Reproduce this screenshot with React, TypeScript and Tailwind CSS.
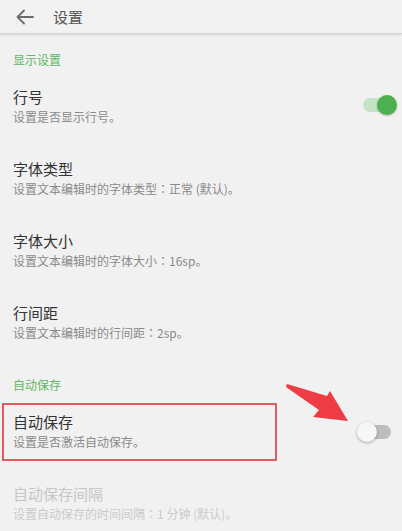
import React from "react";

const font = { fontFamily: '"Noto Sans CJK SC", "Noto Sans", sans-serif' };

function Colon() {
  return <span style={{ fontFamily: '"Noto Sans CJK TC", sans-serif' }}>：</span>;
}

function ToggleOn() {
  return (
    <div className="relative w-[34px] h-[22px] shrink-0">
      <div className="absolute left-0 right-[4px] top-[4px] h-[14px] rounded-full bg-[#c3e3c4]" />
      <div className="absolute right-0 top-[1px] w-[20px] h-[20px] rounded-full bg-[#4caf50] shadow-[0_1px_2px_rgba(0,0,0,0.25)]" />
    </div>
  );
}

function ToggleOff() {
  return (
    <div className="relative w-[34px] h-[22px] shrink-0">
      <div className="absolute left-[4px] right-0 top-[4px] h-[14px] rounded-full bg-[#bdbdbd]" />
      <div className="absolute left-0 top-[1px] w-[20px] h-[20px] rounded-full bg-[#f7f7f7] shadow-[0_1px_3px_rgba(0,0,0,0.3)]" />
    </div>
  );
}

function Item({ title, sub, right }: { title: string; sub: React.ReactNode; right?: React.ReactNode }) {
  return (
    <div className="flex items-center h-[72px] pl-[13px]">
      <div className="flex flex-col">
        <div className="text-[15px] leading-[22px] text-[#333333]">{title}</div>
        <div className="text-[12px] leading-[18px] text-[#8a8a8a]">{sub}</div>
      </div>
      {right && <div className="ml-auto mr-[5px] mt-[-2px]">{right}</div>}
    </div>
  );
}

export default function App() {
  return (
    <div className="relative w-[402px] h-[531px] overflow-hidden bg-[#f1f1f1]" style={font}>
      {/* header */}
      <div className="h-[34px] flex items-center bg-[#f2f2f2] border-b border-[#d4d4d4] shadow-[0_1px_2px_rgba(0,0,0,0.12)]">
        <svg width="18" height="16" viewBox="0 0 18 16" className="ml-[16px]" fill="none" stroke="#6b6b6b" strokeWidth="1.8" strokeLinecap="round" strokeLinejoin="round">
          <path d="M17 8H1.5M8 1.5L1.5 8L8 14.5" />
        </svg>
        <div className="ml-[19px] text-[15px] leading-[20px] text-[#555555] mt-[1px]">设置</div>
      </div>

      {/* section 1 */}
      <div className="pt-[18px] pb-[2px] pl-[13px] text-[12px] leading-[16px] text-[#5fb862]">显示设置</div>
      <Item title="行号" sub="设置是否显示行号。" right={<ToggleOn />} />
      <Item title="字体类型" sub={<>设置文本编辑时的字体类型<Colon />正常 (默认)。</>} />
      <Item title="字体大小" sub={<>设置文本编辑时的字体大小<Colon />16sp。</>} />
      <Item title="行间距" sub={<>设置文本编辑时的行间距<Colon />2sp。</>} />

      {/* section 2 */}
      <div className="pt-[19px] pl-[13px] text-[12px] leading-[16px] text-[#5fb862]">自动保存</div>
      <div className="pt-[10px] flex items-center">
        <div className="ml-[2px] w-[275px] h-[58px] border-2 border-[#e35b5f] pl-[9px] pt-[6px] flex flex-col">
          <div className="text-[15px] leading-[22px] text-[#333333]">自动保存</div>
          <div className="text-[12px] leading-[18px] text-[#8a8a8a]">设置是否激活自动保存。</div>
        </div>
        <div className="ml-auto mr-[11px]">
          <ToggleOff />
        </div>
      </div>
      <div className="pt-[22px] pl-[13px] flex flex-col">
        <div className="text-[15px] leading-[22px] text-[#c6c6c6]">自动保存间隔</div>
        <div className="text-[12px] leading-[18px] text-[#cbcbcb]">设置自动保存的时间间隔<Colon />1 分钟 (默认)。</div>
      </div>

      {/* red annotation arrow */}
      <svg className="absolute left-0 top-0 pointer-events-none" width="402" height="531" viewBox="0 0 402 531">
        <polygon points="287,384 327,396 330,391 348,421 313,417 319,410 286,387" fill="#ee3b44" />
      </svg>
    </div>
  );
}
